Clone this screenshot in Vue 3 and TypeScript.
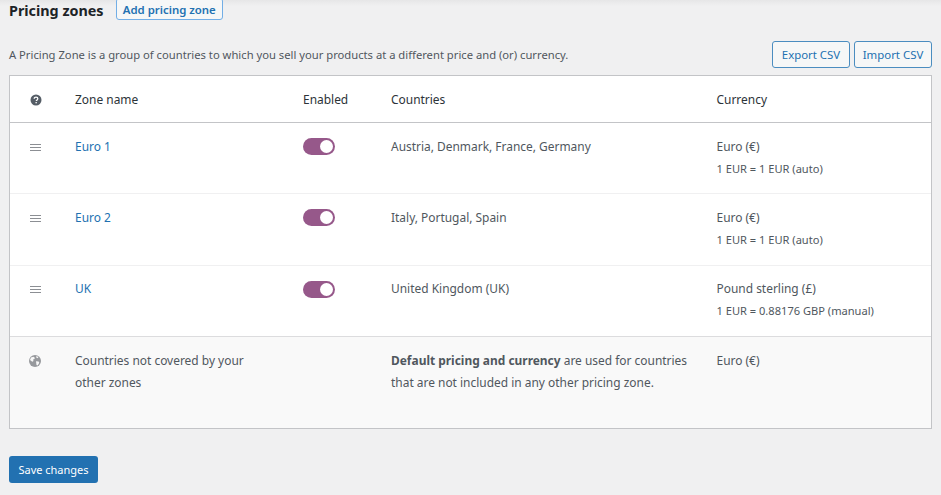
<template>
  <div class="page">
    <div class="title-row">
      <h2>Pricing zones</h2>
      <a class="btn btn-add">Add pricing zone</a>
    </div>

    <div class="intro-row">
      <p>A Pricing Zone is a group of countries to which you sell your products at a different price and (or) currency.</p>
      <div class="csv-actions">
        <a class="btn">Export CSV</a>
        <a class="btn">Import CSV</a>
      </div>
    </div>

    <div class="zones">
      <div class="row head">
        <div class="cell-icon">
          <svg class="help" width="12" height="12" viewBox="0 0 12 12">
            <circle cx="6" cy="6" r="5.5" fill="#555d66" />
            <path d="M4.2 4.7c0-1 .8-1.6 1.8-1.6s1.8.6 1.8 1.5c0 1.3-1.5 1.3-1.5 2.5" fill="none" stroke="#fff" stroke-width="1.3" />
            <rect x="5.5" y="8" width="1.3" height="1.3" fill="#fff" />
          </svg>
        </div>
        <div>Zone name</div>
        <div>Enabled</div>
        <div>Countries</div>
        <div>Currency</div>
      </div>

      <div v-for="zone in zones" :key="zone.name" class="row zone">
        <div class="cell-icon">
          <span class="handle"><i /><i /><i /></span>
        </div>
        <div><a class="zone-link">{{ zone.name }}</a></div>
        <div><span class="toggle"><span class="knob" /></span></div>
        <div>{{ zone.countries }}</div>
        <div>
          {{ zone.currency }}
          <div class="rate">{{ zone.rate }}</div>
        </div>
      </div>

      <div class="row rest">
        <div class="cell-icon">
          <svg width="12" height="12" viewBox="0 0 12 12">
            <circle cx="6" cy="6" r="6" fill="#97999d" />
            <path d="M2 2.6l2.4-.9 1.4 1-.3 1.4-1.4.5.4 1.5-1.2.7L1 5zM7 6.2l2.6.2.7 1.4-1.6 2.6-1.2-.4-.3-2.2zM7.4 1l2 1-.7 1.2-1.5-.8z" fill="#f8f8f8" />
          </svg>
        </div>
        <div class="rest-name">Countries not covered by your other zones</div>
        <div />
        <div class="rest-note"><strong>Default pricing and currency</strong> are used for countries that are not included in any other pricing zone.</div>
        <div>Euro (€)</div>
      </div>
    </div>

    <a class="btn-primary">Save changes</a>
  </div>
</template>

<script setup lang="ts">
interface Zone {
  name: string
  countries: string
  currency: string
  rate: string
}

const zones: Zone[] = [
  { name: 'Euro 1', countries: 'Austria, Denmark, France, Germany', currency: 'Euro (€)', rate: '1 EUR = 1 EUR (auto)' },
  { name: 'Euro 2', countries: 'Italy, Portugal, Spain', currency: 'Euro (€)', rate: '1 EUR = 1 EUR (auto)' },
  { name: 'UK', countries: 'United Kingdom (UK)', currency: 'Pound sterling (£)', rate: '1 EUR = 0.88176 GBP (manual)' },
]
</script>

<style>
html,
body {
  background: #f0f0f1;
}
</style>

<style scoped>
.page {
  height: 495px;
  box-sizing: border-box;
  padding: 0 9px;
  overflow: hidden;
  font-family: "Noto Sans", "Open Sans", sans-serif;
  font-size: 11.95px;
  color: #50575e;
  background: linear-gradient(#e6e6e7, #f0f0f1 6px);
}

.title-row {
  display: flex;
  align-items: center;
  gap: 12px;
  height: 20px;
}

.title-row h2 {
  margin: 0;
  font-size: 14.35px;
  font-weight: 700;
  color: #1d2327;
}

.btn {
  display: inline-flex;
  align-items: center;
  justify-content: center;
  box-sizing: border-box;
  width: 78px;
  height: 27px;
  border: 1px solid #4b8dc0;
  border-radius: 3px;
  background: #f6f7f7;
  color: #2271b1;
  font-size: 11.4px;
}

.btn-add {
  width: 107.5px;
  height: 22px;
  margin-top: -2px;
  border-color: #72aee6;
  font-weight: 600;
}

.intro-row {
  display: flex;
  align-items: center;
  justify-content: space-between;
  height: 27px;
  margin-top: 21px;
}

.intro-row p {
  margin: 0;
  font-size: 11.22px;
}

.csv-actions {
  display: flex;
  gap: 4px;
}

.zones {
  margin-top: 7px;
  box-sizing: border-box;
  height: 354px;
  border: 1px solid #c3c4c7;
  background: #fff;
}

.row {
  display: grid;
  grid-template-columns: 65px 228px 88px 325.5px 1fr;
}

.head {
  height: 47px;
  box-sizing: border-box;
  align-items: center;
  border-bottom: 1px solid #c3c4c7;
  color: #2c3338;
}

.cell-icon {
  display: flex;
  justify-content: center;
  padding-right: 14px;
}

.help {
  margin-top: 2px;
}

.zone {
  height: 71.33px;
  box-sizing: border-box;
  padding-top: 14.5px;
  border-bottom: 1px solid #f0f0f1;
  line-height: 18px;
}

.zone:nth-last-child(2) {
  border-bottom: 1px solid #dcdcde;
}

.handle {
  display: flex;
  flex-direction: column;
  gap: 2px;
  margin-top: 6px;
}

.handle i {
  display: block;
  width: 11px;
  height: 1px;
  background: #8c8f94;
}

.zone-link {
  color: #2271b1;
}

.toggle {
  display: block;
  position: relative;
  width: 31.5px;
  height: 17px;
  margin-top: 0.5px;
  border-radius: 9px;
  background: #96588a;
}

.knob {
  position: absolute;
  top: 2px;
  right: 2px;
  width: 13px;
  height: 13px;
  border-radius: 50%;
  background: #fff;
}

.rate {
  margin-top: 4px;
  font-size: 11.1px;
}

.rest {
  height: 91px;
  box-sizing: border-box;
  padding-top: 13px;
  background: #f9f9f9;
  line-height: 22px;
}

.rest .cell-icon {
  padding-top: 5px;
  padding-right: 15px;
}

.rest-name {
  padding-right: 40px;
}

.rest-note {
  padding-right: 20px;
}

.btn-primary {
  display: inline-flex;
  align-items: center;
  justify-content: center;
  width: 89px;
  height: 27px;
  margin-top: 27px;
  border-radius: 3px;
  background: #2271b1;
  color: #fff;
  font-size: 11px;
}
</style>
